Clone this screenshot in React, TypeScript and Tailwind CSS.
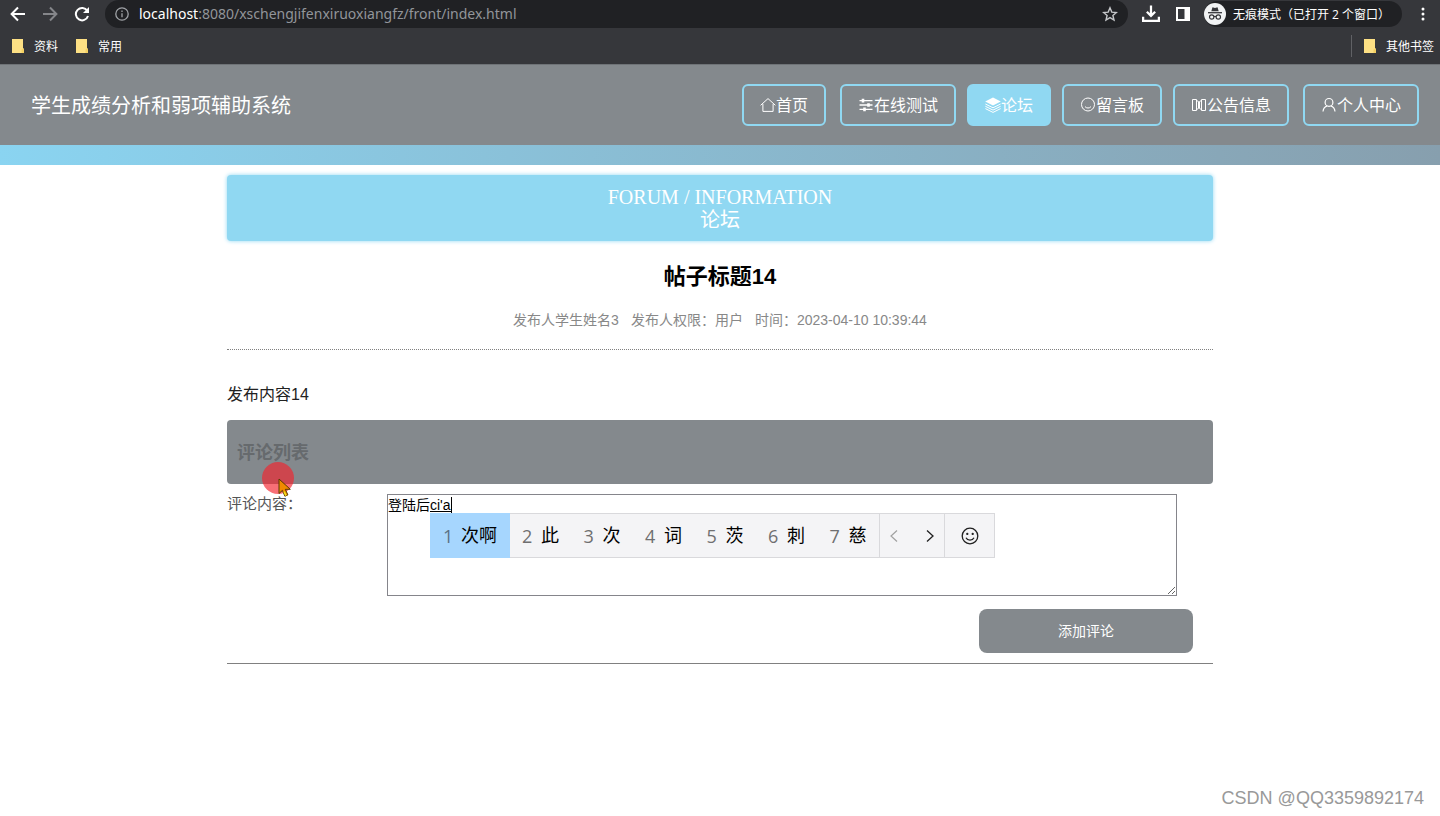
import React from "react";

type IconProps = { className?: string };

function HomeIcon() {
  return (
    <svg viewBox="0 0 16 16" className="size-4" fill="none" stroke="currentColor" strokeWidth="1" aria-hidden="true">
      <path d="M.6 8.3 8 1.6l7.4 6.7M2.9 7v7.4h10.2V7" />
    </svg>
  );
}

function SlidersIcon() {
  return (
    <svg viewBox="0 0 16 16" className="size-4" fill="none" stroke="currentColor" strokeWidth="1.4" aria-hidden="true">
      <path d="M1.5 3.6h13M1.5 8h13M1.5 12.4h13" />
      <path d="M5 1.8v3.6M10.5 6.2v3.6M6.5 10.6v3.6" strokeWidth="2.6" />
    </svg>
  );
}

function LayersIcon() {
  return (
    <svg viewBox="0 0 16 16" className="size-4" aria-hidden="true">
      <path d="M8 .6 15.8 4.600 8 8.600.2 4.600Z" fill="currentColor" />
      <path d="M.4 7 8 10.800 15.600 7M.4 9.300 8 13.100l7.600-3.800M.4 11.600 8 15.400l7.600-3.800" fill="none" stroke="currentColor" strokeWidth="1" />
    </svg>
  );
}

function FaceIcon() {
  return (
    <svg viewBox="0 0 16 16" className="size-4" fill="none" stroke="currentColor" strokeWidth="1" aria-hidden="true">
      <circle cx="8" cy="7.500" r="6.500" />
      <path d="M5 9.600c1.500 1.900 4.500 1.900 6 0" />
    </svg>
  );
}

function BookIcon() {
  return (
    <svg viewBox="0 0 16 16" className="size-4" fill="none" stroke="currentColor" strokeWidth="1" aria-hidden="true">
      <path d="M1.500 2.500h4v11h-4ZM10.500 2.500h4v11h-4ZM5.500 3.500 7.500 4.500v7l-2 1M10.500 3.500l-2 1v7l2 1" />
    </svg>
  );
}

function UserIcon() {
  return (
    <svg viewBox="0 0 16 16" className="size-4" fill="none" stroke="currentColor" strokeWidth="1.200" aria-hidden="true">
      <circle cx="8" cy="5.400" r="3.900" />
      <path d="M2 14.500c.3-3 1.700-4.800 4.200-5.600M14 14.500c-.3-3-1.700-4.800-4.200-5.600" />
    </svg>
  );
}

function FolderIcon() {
  return (
    <svg viewBox="0 0 12 14" className="h-3.5 w-3" aria-hidden="true">
      <path d="M0 0h11v9.500h1V14H0Z" fill="#fde084" />
      <path d="M9.500 14V10.500L12 9.500V14Z" fill="#f3cf62" />
    </svg>
  );
}

function IncognitoIcon() {
  return (
    <svg viewBox="0 0 22 22" className="size-[22px]" aria-hidden="true">
      <circle cx="11" cy="11" r="11" fill="#f1f3f4" />
      <path d="M7.300 8.300 8.500 4.300l2.500.6 2.500-.6 1.200 4Z" fill="#35363a" />
      <path d="M4 9.700h14" stroke="#35363a" strokeWidth="1.300" />
      <g fill="none" stroke="#35363a" strokeWidth="1.200">
        <circle cx="7.700" cy="14" r="2.200" />
        <circle cx="14.300" cy="14" r="2.200" />
        <path d="M9.900 13.700q1.100-.7 2.200 0" />
      </g>
    </svg>
  );
}

function Stroke({ d, className }: IconProps & { d: string }) {
  return (
    <svg viewBox="0 0 16 16" className={className} fill="none" stroke="currentColor" strokeWidth="2" aria-hidden="true">
      <path d={d} />
    </svg>
  );
}

const barButton = "flex size-[18px] shrink-0 items-center justify-center";

function BrowserBar() {
  return (
    <div className="bg-[#36373b] text-white">
      <div className="flex h-7 items-center pl-[9px] pr-2">
        <div className="flex items-center gap-[14px]">
          <button aria-label="后退" className={barButton}>
            <Stroke className="size-4" d="M15 8H2M8 1.500 1.600 8 8 14.500" />
          </button>
          <button aria-label="前进" className={barButton + " text-[#85868a]"}>
            <Stroke className="size-4" d="M1 8h13M8 1.500 14.400 8 8 14.500" />
          </button>
          <button aria-label="刷新" className={barButton}>
            <svg viewBox="0 0 16 16" className="size-4" aria-hidden="true">
              <path d="M13.300 4.800A6.200 6.200 0 1 0 14 10" fill="none" stroke="currentColor" strokeWidth="2" />
              <path d="M15 1v6H9Z" fill="currentColor" />
            </svg>
          </button>
        </div>
        <div className="ml-[14px] flex h-7 flex-1 items-center rounded-full bg-[#202124] px-2.5">
          <svg viewBox="0 0 14 14" className="size-[14px]" fill="none" stroke="#a0a3a7" strokeWidth="1.300" aria-hidden="true">
            <circle cx="7" cy="7" r="6.200" />
            <path d="M7 6.200v4M7 3.500v1.500" />
          </svg>
          <div className="ml-[10px] flex-1 whitespace-nowrap font-['Noto_Sans',sans-serif] text-[14px] leading-7 text-[#92959a]">
            <span className="text-white">localhost</span>:8080/xschengjifenxiruoxiangfz/front/index.html
          </div>
          <button aria-label="添加书签" className="text-[#c4c6c9]">
            <svg viewBox="0 0 16 16" className="size-4" fill="none" stroke="currentColor" strokeWidth="1.400" aria-hidden="true">
              <path d="m8 1.800 1.800 4.300 4.600.4-3.500 3 1.100 4.500L8 11.600 4 14l1.100-4.500-3.500-3 4.600-.4Z" />
            </svg>
          </button>
        </div>
        <button aria-label="下载" className={barButton + " ml-[14px]"}>
          <Stroke className="size-[18px]" d="M8 .5v9M4.300 6 8 9.700 11.700 6M1 10.500V14h14v-3.500" />
        </button>
        <button aria-label="侧边栏" className={barButton + " ml-[14px]"}>
          <svg viewBox="0 0 16 16" className="size-4" aria-hidden="true">
            <path d="M2 2h12v12H2Z" fill="none" stroke="currentColor" strokeWidth="2" />
            <path d="M9.500 2H14v12H9.500Z" fill="currentColor" />
          </svg>
        </button>
        <div className="ml-3 flex h-[26px] items-center gap-[7px] rounded-full bg-[#202124] pr-3">
          <IncognitoIcon />
          <span className="whitespace-nowrap pt-px font-['Open_Sans','Noto_Sans_CJK_SC',sans-serif] text-[12px] leading-5">无痕模式（已打开 2 个窗口）</span>
        </div>
        <button aria-label="更多" className="ml-3 flex size-[18px] items-center justify-center">
          <svg viewBox="0 0 4 16" className="h-4 w-1" fill="currentColor" aria-hidden="true">
            <circle cx="2" cy="3" r="1.500" />
            <circle cx="2" cy="8" r="1.500" />
            <circle cx="2" cy="13" r="1.500" />
          </svg>
        </button>
      </div>
      <div className="flex h-9 items-center justify-between pl-3 pr-1.5 text-[12px] leading-5">
        <div className="flex items-center gap-[18px]">
          {["资料", "常用"].map((name) => (
            <a key={name} href="#" className="flex items-center gap-[10px]">
              <FolderIcon />
              <span className="pt-0.5">{name}</span>
            </a>
          ))}
        </div>
        <a href="#" className="flex items-center gap-[10px] border-l border-[#606165] pl-3">
          <FolderIcon />
          <span className="pt-0.5">其他书签</span>
        </a>
      </div>
    </div>
  );
}

function NavButton({ label, icon, active }: { label: string; icon: React.ReactNode; active?: boolean }) {
  return (
    <a
      href="#"
      className={
        "flex h-[42px] items-center whitespace-nowrap rounded-md border-2 border-[#90d8f2] px-4 text-[16px] leading-6 text-white " +
        (active ? "bg-[#90d8f2]" : "")
      }
    >
      {icon}
      <span className="pt-0.5">{label}</span>
    </a>
  );
}

function SiteHeader() {
  return (
    <header>
      <div className="flex h-[81px] items-center justify-between border-t border-[#6f7377] bg-[#84898d] pl-[31px] pr-[21px]">
        <h1 className="pt-0.5 text-[20px] leading-8 text-white">学生成绩分析和弱项辅助系统</h1>
        <nav className="flex gap-[14px]">
          <NavButton label="首页" icon={<HomeIcon />} />
          <div className="flex gap-[11px]">
            <NavButton label="在线测试" icon={<SlidersIcon />} />
            <NavButton label="论坛" icon={<LayersIcon />} active />
            <NavButton label="留言板" icon={<FaceIcon />} />
            <NavButton label="公告信息" icon={<BookIcon />} />
          </div>
          <NavButton label="个人中心" icon={<UserIcon />} />
        </nav>
      </div>
      <div className="h-5 bg-linear-to-r from-[#8ad4f1] to-[#879fae]" />
    </header>
  );
}

const candidates = ["此", "次", "词", "茨", "刺", "慈"];

function CandidateBar() {
  return (
    <div className="absolute left-[43px] top-[19px] flex h-[45px] items-stretch border border-[#d9d9dc] bg-[#f4f4f6] text-[18px] leading-6 text-black">
      <button className="-my-px -ml-px flex items-center bg-[#a6d6fe] pl-[13px] pr-[13px]">
        <span className="w-[18px] text-left font-['Open_Sans',sans-serif] text-[#5b7186]">1</span>
        次啊
      </button>
      <div className="flex w-[369px]">
        {candidates.map((word, i) => (
          <button key={word} className="flex flex-1 items-center pl-3">
            <span className="w-[19px] text-left font-['Open_Sans',sans-serif] text-[#6f6f70]">{i + 2}</span>
            {word}
          </button>
        ))}
      </div>
      <div className="flex items-center gap-[20px] border-l border-[#d9d9dc] px-1.5">
        <button aria-label="上一页" className="text-[#a0a0a0]">
          <svg viewBox="0 0 16 16" className="size-4" fill="none" stroke="currentColor" strokeWidth="1.200" aria-hidden="true">
            <path d="M11 2.500 5 8l6 5.500" />
          </svg>
        </button>
        <button aria-label="下一页" className="text-[#202020]">
          <svg viewBox="0 0 16 16" className="size-4" fill="none" stroke="currentColor" strokeWidth="1.300" aria-hidden="true">
            <path d="m5 2.500 6 5.500-6 5.500" />
          </svg>
        </button>
      </div>
      <button aria-label="表情" className="flex w-[50px] items-center justify-center border-l border-[#d9d9dc] text-[#202020]">
        <svg viewBox="0 0 18 18" className="size-[18px]" fill="none" stroke="currentColor" strokeWidth="1.300" aria-hidden="true">
          <circle cx="9" cy="9" r="7.800" />
          <path d="M5 10.800c1.600 3.200 6.400 3.200 8 0" />
          <circle cx="6.300" cy="6.900" r=".5" fill="currentColor" />
          <circle cx="11.700" cy="6.900" r=".5" fill="currentColor" />
        </svg>
      </button>
    </div>
  );
}

function CommentForm() {
  return (
    <form className="mt-[10px] border-b border-[#808080] pb-[10px]" onSubmit={(e) => e.preventDefault()}>
      <div className="flex pr-9">
        <label htmlFor="comment" className="w-40 shrink-0 text-[15px] leading-5 text-[#555]">
          评论内容：
        </label>
        <div className="relative flex-1">
          <textarea
            id="comment"
            defaultValue="登陆后ci'a"
            className="block h-[102px] w-full resize border border-[#85858b] bg-white p-0 text-[14px] leading-5 text-black outline-none"
          />
          <span className="absolute left-[43px] top-[17px] h-px w-[21px] bg-black" />
          <span className="absolute left-16 top-[3px] h-4 w-px bg-black" />
          <CandidateBar />
        </div>
      </div>
      <div className="mt-[13px] flex justify-end pr-5">
        <button className="h-11 w-[214px] rounded-lg bg-[#84898d] text-[14px] leading-5 text-white">添加评论</button>
      </div>
    </form>
  );
}

function Pointer() {
  return (
    <div className="absolute left-[35px] top-[42px] size-8">
      <div className="size-8 rounded-full bg-[#f5222d]/65" />
      <svg viewBox="0 0 14 20" className="absolute left-4 top-4 h-5 w-3.5" aria-hidden="true">
        <path d="M1 1v14.500l3.400-3.100 2.500 5.800 3-1.300-2.600-5.600h5Z" fill="#f08a00" stroke="#5a3a00" strokeWidth="1" />
        <path d="m6 13.500 2 4.200" stroke="#f4e21a" strokeWidth="1.600" />
      </svg>
    </div>
  );
}

export default function App() {
  return (
    <div className="relative min-h-screen bg-white font-['Liberation_Sans','Noto_Sans_CJK_SC',sans-serif]">
      <BrowserBar />
      <SiteHeader />
      <main className="mx-auto w-full max-w-[986px] pt-[10px]">
        <div className="rounded bg-[#90d8f2] pb-[9px] pt-[11px] text-center font-['Liberation_Serif','Noto_Sans_CJK_SC',serif] text-[20px] text-white shadow-[0_0_4px_#90d8f2]">
          <p className="leading-[23px]">FORUM / INFORMATION</p>
          <p className="leading-[23px]">论坛</p>
        </div>
        <h2 className="mt-5 text-center text-[22px] font-bold leading-8 text-black">帖子标题14</h2>
        <div className="mt-[17px] flex justify-center gap-3 border-b border-dotted border-[#808080] pb-[19px] text-[14px] leading-5 text-[#888]">
          <span>发布人学生姓名3</span>
          <span>发布人权限：用户</span>
          <span>时间：2023-04-10 10:39:44</span>
        </div>
        <p className="mt-[33px] text-[16px] leading-6 text-[#222]">发布内容14</p>
        <div className="relative mt-[13px] rounded bg-[#84898d] px-[10px] pb-[19px] pt-[21px]">
          <h3 className="text-[18px] font-bold leading-6 text-[#666a6d]">评论列表</h3>
          <Pointer />
        </div>
        <CommentForm />
      </main>
      <div className="absolute bottom-[8px] right-4 text-[18px] leading-5 text-[#999]">CSDN @QQ3359892174</div>
    </div>
  );
}
